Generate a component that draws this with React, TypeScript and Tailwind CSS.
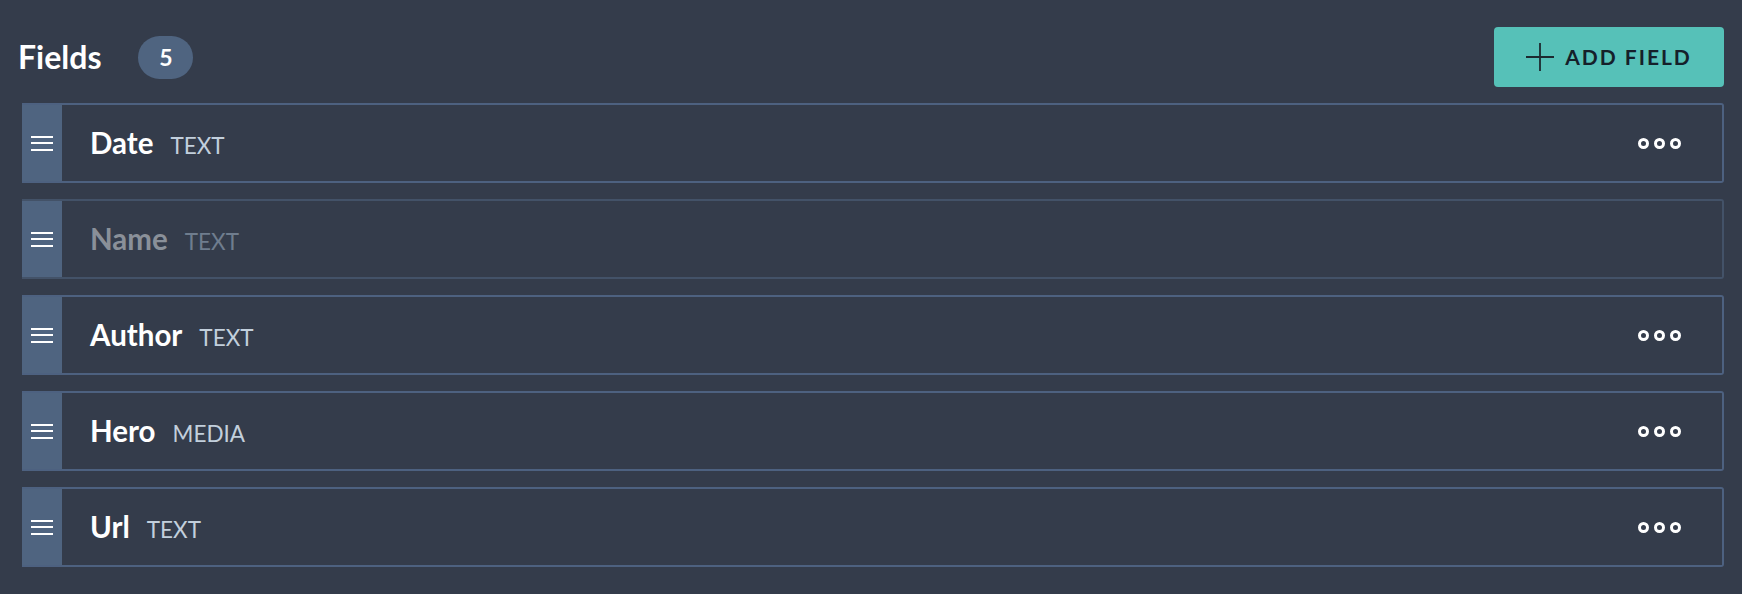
import React from "react"

type Field = { name: string; type: string; disabled?: boolean }

const fields: Field[] = [
  { name: "Date", type: "TEXT" },
  { name: "Name", type: "TEXT", disabled: true },
  { name: "Author", type: "TEXT" },
  { name: "Hero", type: "MEDIA" },
  { name: "Url", type: "TEXT" },
]

function Handle() {
  return (
    <div className="w-[40px] shrink-0 self-stretch bg-[#4f6480] flex items-center justify-center">
      <div className="flex flex-col gap-[4.5px] w-[22px]">
        <span className="h-[2px] bg-white block"></span>
        <span className="h-[2px] bg-white block"></span>
        <span className="h-[2px] bg-white block"></span>
      </div>
    </div>
  )
}

function Dots() {
  return (
    <div className="flex items-center gap-[5px] mr-[41px]">
      <span className="w-[11px] h-[11px] rounded-full border-[3px] border-white block"></span>
      <span className="w-[11px] h-[11px] rounded-full border-[3px] border-white block"></span>
      <span className="w-[11px] h-[11px] rounded-full border-[3px] border-white block"></span>
    </div>
  )
}

function FieldRow({ field }: { field: Field }) {
  return (
    <div
      className={`h-[80px] flex items-center rounded-r-[3px] border-2 border-l-0 ${
        field.disabled ? "border-[#435268]" : "border-[#4d6180]"
      }`}
    >
      <Handle />
      <div className="flex-1 flex items-baseline pl-[28px]">
        <span
          className={`text-[29.5px] font-bold ${field.disabled ? "text-[#8a9099]" : "text-white"}`}
        >
          {field.name}
        </span>
        <span
          className={`ml-[17px] text-[22.5px] ${field.disabled ? "text-[#6f7d8e]" : "text-[#c2cfdc]"}`}
        >
          {field.type}
        </span>
      </div>
      {!field.disabled && <Dots />}
    </div>
  )
}

export default function App() {
  return (
    <div
      className="w-full h-[594px] bg-[#343c4b] pl-[18px] pr-[18px] pt-[27px]"
      style={{ fontFamily: "Lato, 'Noto Sans', sans-serif" }}
    >
      {/* Header */}
      <div className="flex items-center justify-between h-[60px]">
        <div className="flex items-center">
          <h1 className="text-[32px] font-bold text-white leading-none">Fields</h1>
          <span className="ml-[37px] w-[55px] h-[43px] rounded-full bg-[#4f6480] text-white text-[23px] font-bold flex items-center justify-center">
            5
          </span>
        </div>
        <button className="w-[230px] h-[60px] rounded-[4px] bg-[#56c1b8] flex items-center justify-center gap-[11px] text-[#15202a]">
          <svg width="28" height="28" viewBox="0 0 28 28" fill="none" stroke="#1d2a30" strokeWidth="1.8">
            <path d="M14 0v28M0 14h28" />
          </svg>
          <span className="text-[21px] font-bold tracking-[2px]">ADD FIELD</span>
        </button>
      </div>

      {/* Field list */}
      <div className="ml-[4px] mt-[16px] flex flex-col gap-[16px]">
        {fields.map((f) => (
          <FieldRow key={f.name} field={f} />
        ))}
      </div>
    </div>
  )
}
